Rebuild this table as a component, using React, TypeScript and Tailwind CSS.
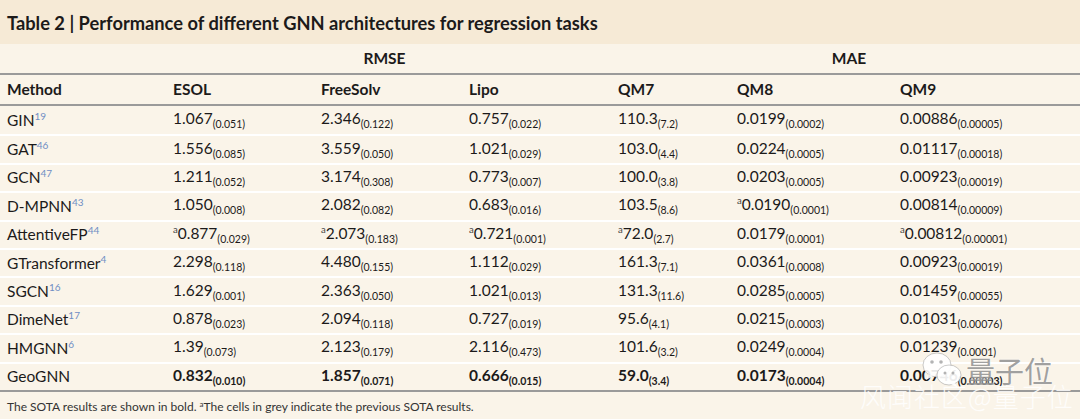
import React from "react";

type Cell = { v: string; s: string; a?: boolean };
type Row = { name: string; ref: string; cells: Cell[]; bold?: boolean };

const c = (v: string, s: string, a = false): Cell => ({ v, s, a });

const rows: Row[] = [
  { name: "GIN", ref: "19", cells: [c("1.067", "0.051"), c("2.346", "0.122"), c("0.757", "0.022"), c("110.3", "7.2"), c("0.0199", "0.0002"), c("0.00886", "0.00005")] },
  { name: "GAT", ref: "46", cells: [c("1.556", "0.085"), c("3.559", "0.050"), c("1.021", "0.029"), c("103.0", "4.4"), c("0.0224", "0.0005"), c("0.01117", "0.00018")] },
  { name: "GCN", ref: "47", cells: [c("1.211", "0.052"), c("3.174", "0.308"), c("0.773", "0.007"), c("100.0", "3.8"), c("0.0203", "0.0005"), c("0.00923", "0.00019")] },
  { name: "D-MPNN", ref: "43", cells: [c("1.050", "0.008"), c("2.082", "0.082"), c("0.683", "0.016"), c("103.5", "8.6"), c("0.0190", "0.0001", true), c("0.00814", "0.00009")] },
  { name: "AttentiveFP", ref: "44", cells: [c("0.877", "0.029", true), c("2.073", "0.183", true), c("0.721", "0.001", true), c("72.0", "2.7", true), c("0.0179", "0.0001"), c("0.00812", "0.00001", true)] },
  { name: "GTransformer", ref: "4", cells: [c("2.298", "0.118"), c("4.480", "0.155"), c("1.112", "0.029"), c("161.3", "7.1"), c("0.0361", "0.0008"), c("0.00923", "0.00019")] },
  { name: "SGCN", ref: "16", cells: [c("1.629", "0.001"), c("2.363", "0.050"), c("1.021", "0.013"), c("131.3", "11.6"), c("0.0285", "0.0005"), c("0.01459", "0.00055")] },
  { name: "DimeNet", ref: "17", cells: [c("0.878", "0.023"), c("2.094", "0.118"), c("0.727", "0.019"), c("95.6", "4.1"), c("0.0215", "0.0003"), c("0.01031", "0.00076")] },
  { name: "HMGNN", ref: "6", cells: [c("1.39", "0.073"), c("2.123", "0.179"), c("2.116", "0.473"), c("101.6", "3.2"), c("0.0249", "0.0004"), c("0.01239", "0.0001")] },
  { name: "GeoGNN", ref: "", bold: true, cells: [c("0.832", "0.010"), c("1.857", "0.071"), c("0.666", "0.015"), c("59.0", "3.4"), c("0.0173", "0.0004"), c("0.00746", "0.00003")] },
];

const grid = "grid grid-cols-[166px_148px_148px_149px_119px_163px_1fr] pl-[7px]";

function WeChatIcon() {
  return (
    <svg width="44" height="40" viewBox="0 0 44 40">
      <ellipse cx="17" cy="15" rx="14" ry="12" fill="rgba(255,255,255,0.9)" stroke="rgba(150,150,150,0.5)" strokeWidth="1" />
      <path d="M8 24 L6 30 L13 26 Z" fill="rgba(255,255,255,0.9)" />
      <circle cx="12" cy="12" r="1.8" fill="rgba(160,160,160,0.8)" />
      <circle cx="21" cy="12" r="1.8" fill="rgba(160,160,160,0.8)" />
      <ellipse cx="29" cy="25" rx="12" ry="10" fill="rgba(255,255,255,0.92)" stroke="rgba(150,150,150,0.5)" strokeWidth="1" />
      <path d="M35 33 L38 38 L31 34 Z" fill="rgba(255,255,255,0.92)" />
      <circle cx="25" cy="23" r="1.5" fill="rgba(160,160,160,0.8)" />
      <circle cx="33" cy="23" r="1.5" fill="rgba(160,160,160,0.8)" />
    </svg>
  );
}

export default function App() {
  return (
    <div className="relative w-[1080px] h-[419px] overflow-hidden bg-[#faf4e9] text-[#1c1a1a] font-['Lato',sans-serif]">
      <div className="h-[44px] bg-[#f6ead6] flex items-center pl-[7px] pt-[3px]">
        <h1 className="text-[18.3px] font-bold">
          Table 2 | Performance of different GNN architectures for regression tasks
        </h1>
      </div>
      <div className={grid + " h-[29px] items-center text-[15.5px] font-bold"}>
        <div />
        <div className="col-span-3 text-center pr-[22px]">RMSE</div>
        <div className="col-span-3 text-center">MAE</div>
      </div>
      <div className="h-[2px] bg-[#9a9a9a]" />
      <div className={grid + " h-[29px] items-center text-[15.5px] font-bold"}>
        <div>Method</div>
        <div>ESOL</div>
        <div>FreeSolv</div>
        <div>Lipo</div>
        <div>QM7</div>
        <div>QM8</div>
        <div>QM9</div>
      </div>
      <div className="h-[2px] bg-[#9a9a9a]" />
      <div>
        {rows.map((r, i) => (
          <div
            key={r.name}
            className={grid + " h-[28.4px] items-center text-[15.5px] whitespace-nowrap " + (i > 0 ? "border-t-2 border-white" : "")}
          >
            <div>
              {r.name}
              {r.ref && <span className="text-[10px] align-[6px] text-[#6f8ec4]">{r.ref}</span>}
            </div>
            {r.cells.map((cell, j) => (
              <div key={j} className={r.bold ? "font-bold" : ""}>
                {cell.a && <span className="text-[9.5px] align-[6px] text-[#444]">a</span>}
                {cell.v}
                <span className="text-[10.5px] align-[-4px]">({cell.s})</span>
              </div>
            ))}
          </div>
        ))}
      </div>
      <div className="h-[2px] bg-[#9a9a9a]" />
      <div className="pl-[7px] pt-[6px] text-[12px] text-[#333]">
        The SOTA results are shown in bold. <span className="text-[8px] align-[4px]">a</span>The cells in grey indicate the previous SOTA results.
      </div>

      <div className="absolute left-[920px] top-[350px] flex items-center">
        <WeChatIcon />
        <span className="ml-[2px] text-[29px] leading-none text-[rgba(130,130,130,0.75)] font-['Noto_Sans_CJK_SC',sans-serif] [text-shadow:0_0_2px_rgba(255,255,255,0.9)]">
          量子位
        </span>
      </div>
      <div className="absolute left-[860px] top-[383px] text-[26px] leading-none text-[rgba(255,255,255,0.85)] font-['Noto_Sans_CJK_SC',sans-serif] font-light tracking-[1px]">
        风闻社区@量子位
      </div>
    </div>
  );
}
